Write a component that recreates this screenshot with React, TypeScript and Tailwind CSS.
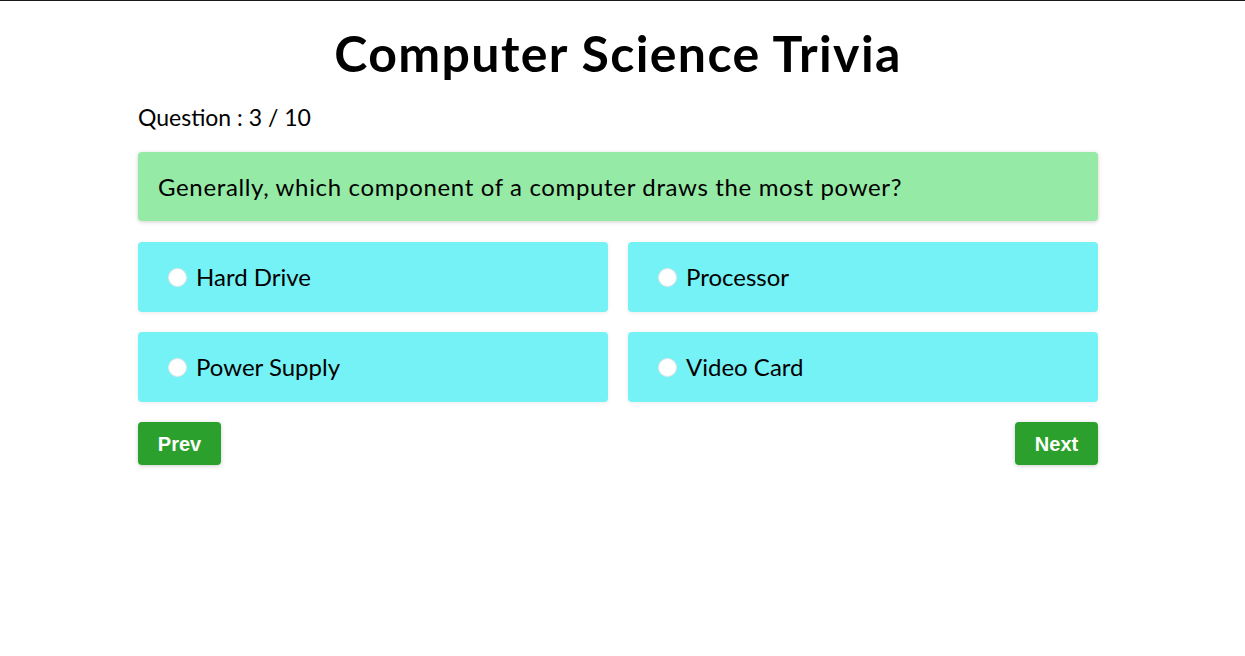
import React from 'react';

const options = ['Hard Drive', 'Processor', 'Power Supply', 'Video Card'];

const App: React.FC = () => {
    return (
        <div className="min-h-screen bg-white border-t border-[#1a1a1a] font-['Lato',sans-serif] text-black">
            <div className="w-[960px] ml-[138px]">
                <h1 className="text-center text-[50px] font-bold leading-none pt-[27px] tracking-[0.028em]">
                    Computer Science Trivia
                </h1>

                <p className="text-[23px] mt-[24px] leading-[30px]">Question : 3 / 10</p>

                <div className="mt-[20px] h-[69px] bg-[#95eaa6] rounded-[4px] shadow-[0_1px_4px_rgba(0,0,0,0.18)] flex items-center px-[20px] text-[24px] tracking-[0.027em]">
                    Generally, which component of a computer draws the most power?
                </div>

                <div className="mt-[21px] grid grid-cols-2 gap-[20px]">
                    {options.map((opt) => (
                        <label
                            key={opt}
                            className="h-[70px] bg-[#75f2f6] rounded-[4px] shadow-[0_1px_4px_rgba(0,0,0,0.08)] flex items-center pl-[30px] text-[24px] cursor-pointer"
                        >
                            <span className="w-[19px] h-[19px] rounded-full bg-white border border-[#e5e5e5] mr-[9px]" />
                            {opt}
                        </label>
                    ))}
                </div>

                <div className="mt-[20px] flex justify-between">
                    <button className="w-[83px] h-[43px] bg-[#2ca02c] rounded-[4px] text-white font-bold text-[20px] font-['Liberation_Sans',sans-serif] shadow-[0_1px_4px_rgba(0,0,0,0.2)]">
                        Prev
                    </button>
                    <button className="w-[83px] h-[43px] bg-[#2ca02c] rounded-[4px] text-white font-bold text-[20px] font-['Liberation_Sans',sans-serif] shadow-[0_1px_4px_rgba(0,0,0,0.2)]">
                        Next
                    </button>
                </div>
            </div>
        </div>
    );
};

export default App;
